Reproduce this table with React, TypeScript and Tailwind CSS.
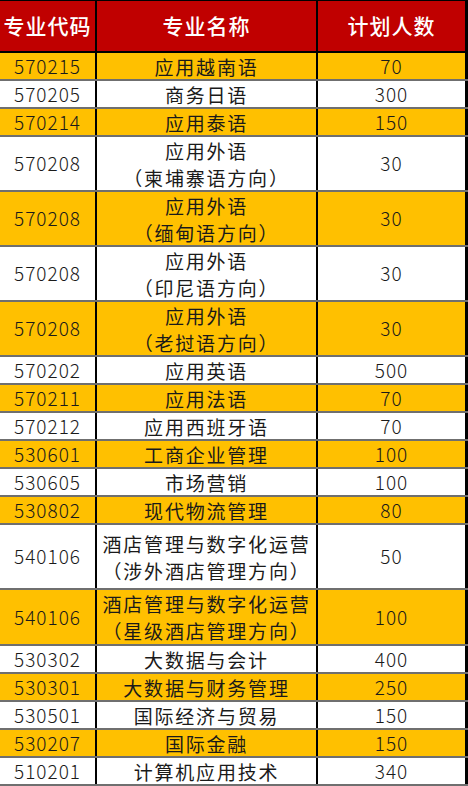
type Row = {
  code: string;
  name: string[];
  count: string;
  hl: boolean;
  h: string;
};

const ROWS: Row[] = [
  { code: "570215", name: ["应用越南语"], count: "70", hl: true, h: "h-[28px]" },
  { code: "570205", name: ["商务日语"], count: "300", hl: false, h: "h-[28px]" },
  { code: "570214", name: ["应用泰语"], count: "150", hl: true, h: "h-[28px]" },
  { code: "570208", name: ["应用外语", "（柬埔寨语方向）"], count: "30", hl: false, h: "h-[55px]" },
  { code: "570208", name: ["应用外语", "（缅甸语方向）"], count: "30", hl: true, h: "h-[55px]" },
  { code: "570208", name: ["应用外语", "（印尼语方向）"], count: "30", hl: false, h: "h-[55px]" },
  { code: "570208", name: ["应用外语", "（老挝语方向）"], count: "30", hl: true, h: "h-[55px]" },
  { code: "570202", name: ["应用英语"], count: "500", hl: false, h: "h-[28px]" },
  { code: "570211", name: ["应用法语"], count: "70", hl: true, h: "h-[28px]" },
  { code: "570212", name: ["应用西班牙语"], count: "70", hl: false, h: "h-[28px]" },
  { code: "530601", name: ["工商企业管理"], count: "100", hl: true, h: "h-[28px]" },
  { code: "530605", name: ["市场营销"], count: "100", hl: false, h: "h-[28px]" },
  { code: "530802", name: ["现代物流管理"], count: "80", hl: true, h: "h-[28px]" },
  { code: "540106", name: ["酒店管理与数字化运营", "（涉外酒店管理方向）"], count: "50", hl: false, h: "h-[65px]" },
  { code: "540106", name: ["酒店管理与数字化运营", "（星级酒店管理方向）"], count: "100", hl: true, h: "h-[56px]" },
  { code: "530302", name: ["大数据与会计"], count: "400", hl: false, h: "h-[28px]" },
  { code: "530301", name: ["大数据与财务管理"], count: "250", hl: true, h: "h-[28px]" },
  { code: "530501", name: ["国际经济与贸易"], count: "150", hl: false, h: "h-[28px]" },
  { code: "530207", name: ["国际金融"], count: "150", hl: true, h: "h-[28px]" },
  { code: "510201", name: ["计算机应用技术"], count: "340", hl: false, h: "h-[28px]" },
];

const font = { fontFamily: '"Noto Sans CJK SC", "Noto Sans", sans-serif' };

function TableRow({ row }: { row: Row }) {
  return (
    <div
      className={`flex ${row.h} border-b-2 border-[#6f6f6f] text-[19px] text-[#1a1a1a] ${
        row.hl ? "bg-[#ffc000]" : "bg-white"
      }`}
    >
      <div className="flex w-[97px] items-center justify-center border-r-2 border-black font-light tracking-[1px]">
        {row.code}
      </div>
      <div className="flex w-[221px] flex-col items-center justify-center border-r-2 border-black leading-[27px] tracking-[1.8px]">
        {row.name.map((line, i) => (
          <span key={i}>{line}</span>
        ))}
      </div>
      <div className="flex w-[150px] items-center justify-center border-r-[3px] border-black font-light tracking-[1px]">
        {row.count}
      </div>
    </div>
  );
}

export default function App() {
  return (
    <div className="w-[468px] bg-white" style={font}>
      <div className="flex h-[53px] border-t border-b-2 border-black bg-[#c00000] text-[21px] font-medium tracking-[1px] text-white">
        <div className="flex w-[97px] items-center justify-center border-r-2 border-black">专业代码</div>
        <div className="flex w-[221px] items-center justify-center border-r-2 border-black">专业名称</div>
        <div className="flex w-[150px] items-center justify-center border-r-[3px] border-black">计划人数</div>
      </div>
      {ROWS.map((row, i) => (
        <TableRow key={i} row={row} />
      ))}
    </div>
  );
}
